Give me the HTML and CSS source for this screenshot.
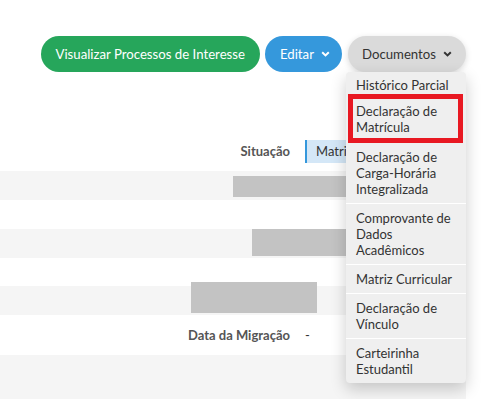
FILE: index.html
```html
<!DOCTYPE html>
<html lang="pt-BR">
<head>
  <meta charset="UTF-8">
  <meta name="viewport" content="width=device-width, initial-scale=1.0">
  <title>Discente</title>
  <link rel="stylesheet" href="styles.css">
</head>
<body>
  <div class="page">
    <div class="actions">
      <div class="btn btn-green">Visualizar Processos de Interesse</div>
      <div class="btn btn-blue">Editar
        <svg class="caret" width="9" height="6" viewBox="0 0 9 6"><path d="M1.2 1.2l3.3 3.2 3.3-3.2" fill="none" stroke="currentColor" stroke-width="2"/></svg>
      </div>
      <div class="dropdown">
        <div class="btn btn-gray">Documentos
          <svg class="caret" width="9" height="6" viewBox="0 0 9 6"><path d="M1.2 1.2l3.3 3.2 3.3-3.2" fill="none" stroke="currentColor" stroke-width="2"/></svg>
        </div>
        <ul class="menu">
          <li class="menu-item first">Histórico Parcial</li>
          <li class="menu-item marked">Declaração de Matrícula</li>
          <li class="menu-item">Declaração de Carga-Horária Integralizada</li>
          <li class="menu-item">Comprovante de Dados Acadêmicos</li>
          <li class="menu-item">Matriz Curricular</li>
          <li class="menu-item">Declaração de Vínculo</li>
          <li class="menu-item last">Carteirinha Estudantil</li>
        </ul>
      </div>
    </div>

    <div class="details">
      <div class="row tall">
        <div class="label">Situação</div>
        <div class="value"><span class="status">Matriculado</span></div>
      </div>
      <div class="row striped">
        <div class="redact r1"></div>
      </div>
      <div class="row"></div>
      <div class="row striped">
        <div class="redact r2"></div>
      </div>
      <div class="row short"></div>
      <div class="row striped">
        <div class="redact r3"></div>
      </div>
      <div class="row tall">
        <div class="label">Data da Migração</div>
        <div class="value">-</div>
      </div>
      <div class="row striped end"></div>
    </div>
  </div>
</body>
</html>
```

FILE: styles.css
```css
body {
  margin: 0;
  font-family: Lato, "Noto Sans", sans-serif;
  color: #333;
  background: #fff;
  overflow: hidden;
}

.page {
  padding: 36px 18px 0 0;
}

.actions {
  display: flex;
  justify-content: flex-end;
  gap: 5px;
}

.btn {
  height: 36px;
  border-radius: 18px;
  padding: 0 14px;
  display: flex;
  align-items: center;
  gap: 7px;
  font-size: 13.2px;
  white-space: nowrap;
  box-sizing: border-box;
}

.btn-green {
  background: #26a65b;
  color: #fff;
  padding: 0 15px;
}

.btn-blue {
  background: #3598dc;
  color: #fff;
  padding: 0 12px 0 15px;
}

.btn-gray {
  background: #dadada;
  color: #333;
  box-shadow: 0 2px 6px rgba(0, 0, 0, 0.15);
}

.caret {
  display: block;
}

.dropdown {
  position: relative;
  margin-left: 1px;
}

.menu {
  position: absolute;
  top: 100%;
  right: 0;
  width: 120px;
  margin: 0;
  padding: 0;
  list-style: none;
  background: #efefef;
  border-radius: 4px;
  box-shadow: 0 6px 16px rgba(0, 0, 0, 0.2);
  font-size: 13px;
  line-height: 16px;
  z-index: 5;
}

.menu-item {
  padding: 6px 8px 6px 10px;
  border-bottom: 1px solid #fff;
}

.menu-item.first {
  padding: 5px 8px 1px 10px;
  border-bottom: 0;
}

.menu-item.marked {
  margin: 0 3px 0 2px;
  padding: 4px 3px 3px 3px;
  border: 5px solid #e81822;
}

.menu-item.last {
  border-bottom: 0;
}

.details {
  margin-top: 59px;
}

.row {
  position: relative;
  display: grid;
  grid-template-columns: 290px 1fr;
  column-gap: 15px;
  align-items: center;
  height: 29px;
  font-size: 13px;
}

.row.tall {
  height: 40px;
}

.row.short {
  height: 28px;
}

.row.striped {
  background: #f5f5f5;
}

.row.end {
  height: 50px;
}

.label {
  text-align: right;
  font-weight: bold;
  color: #555;
}

.status {
  display: block;
  width: 30px;
  height: 23px;
  line-height: 23px;
  padding-left: 9px;
  background: #d4e7f7;
  border-left: 2px solid #3598dc;
  overflow: hidden;
  white-space: nowrap;
}

.redact {
  position: absolute;
  background: #c3c3c3;
}

.redact.r1 {
  left: 233px;
  top: 5px;
  width: 170px;
  height: 21px;
}

.redact.r2 {
  left: 252px;
  top: 0;
  width: 150px;
  height: 27px;
}

.redact.r3 {
  left: 191px;
  top: -4px;
  width: 126px;
  height: 31px;
}
```
